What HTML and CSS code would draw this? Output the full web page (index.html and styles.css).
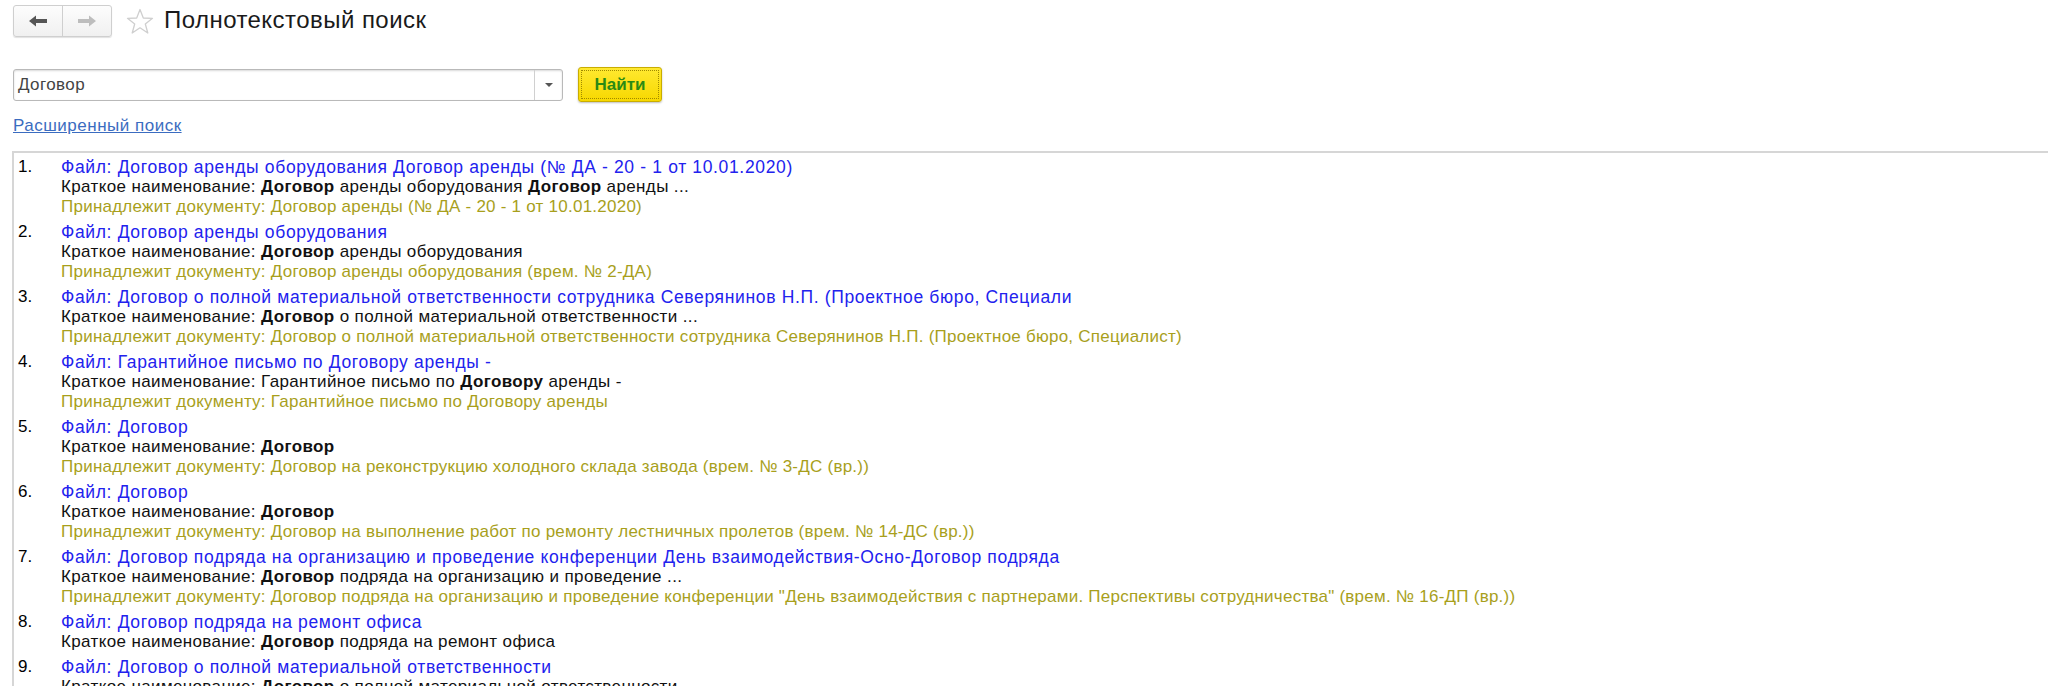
FILE: index.html
```html
<!DOCTYPE html>
<html lang="ru">
<head>
  <meta charset="UTF-8">
  <title>Полнотекстовый поиск</title>
  <link rel="stylesheet" href="styles.css">
</head>
<body>
  <!-- Заголовок формы -->
  <div class="header">
    <div class="nav-group">
      <button class="nav-btn nav-back" type="button">
        <svg width="20" height="14" viewBox="0 0 20 14"><path d="M1 7 L8 1.5 V5 H19 V9 H8 V12.5 Z" fill="#555"/></svg>
      </button>
      <button class="nav-btn nav-fwd" type="button">
        <svg width="20" height="14" viewBox="0 0 20 14"><path d="M19 7 L12 1.5 V5 H1 V9 H12 V12.5 Z" fill="#bdbdbd"/></svg>
      </button>
    </div>
    <svg class="star" width="28" height="27" viewBox="0 0 28 27">
      <path d="M14 1.5 L17.3 10 L26.5 10.3 L19.3 16 L21.8 25 L14 19.8 L6.2 25 L8.7 16 L1.5 10.3 L10.7 10 Z" fill="none" stroke="#cfcfcf" stroke-width="1.3" stroke-linejoin="round"/>
    </svg>
    <h1 class="title">Полнотекстовый поиск</h1>
  </div>

  <!-- Строка поиска -->
  <div class="search-row">
    <div class="combo">
      <span class="combo-text">Договор</span>
      <span class="combo-btn"><span class="combo-arrow"></span></span>
    </div>
    <button class="find-btn" type="button"><span class="find-inner">Найти</span></button>
  </div>

  <a class="adv-link" href="#">Расширенный поиск</a>

  <!-- Результаты -->
  <div class="results">
    <div class="item">
      <div class="num">1.</div>
      <div class="body">
        <div class="ttl">Файл: Договор аренды оборудования Договор аренды (№ ДА - 20 - 1 от 10.01.2020)</div>
        <div class="desc">Краткое наименование: <b>Договор</b> аренды оборудования <b>Договор</b> аренды ...</div>
        <div class="owner">Принадлежит документу: Договор аренды (№ ДА - 20 - 1 от 10.01.2020)</div>
      </div>
    </div>
    <div class="item">
      <div class="num">2.</div>
      <div class="body">
        <div class="ttl">Файл: Договор аренды оборудования</div>
        <div class="desc">Краткое наименование: <b>Договор</b> аренды оборудования</div>
        <div class="owner">Принадлежит документу: Договор аренды оборудования (врем. № 2-ДА)</div>
      </div>
    </div>
    <div class="item">
      <div class="num">3.</div>
      <div class="body">
        <div class="ttl">Файл: Договор о полной материальной ответственности сотрудника Северянинов Н.П. (Проектное бюро, Специали</div>
        <div class="desc">Краткое наименование: <b>Договор</b> о полной материальной ответственности ...</div>
        <div class="owner">Принадлежит документу: Договор о полной материальной ответственности сотрудника Северянинов Н.П. (Проектное бюро, Специалист)</div>
      </div>
    </div>
    <div class="item">
      <div class="num">4.</div>
      <div class="body">
        <div class="ttl">Файл: Гарантийное письмо по Договору аренды -</div>
        <div class="desc">Краткое наименование: Гарантийное письмо по <b>Договору</b> аренды -</div>
        <div class="owner">Принадлежит документу: Гарантийное письмо по Договору аренды</div>
      </div>
    </div>
    <div class="item">
      <div class="num">5.</div>
      <div class="body">
        <div class="ttl">Файл: Договор</div>
        <div class="desc">Краткое наименование: <b>Договор</b></div>
        <div class="owner">Принадлежит документу: Договор на реконструкцию холодного склада завода (врем. № 3-ДС (вр.))</div>
      </div>
    </div>
    <div class="item">
      <div class="num">6.</div>
      <div class="body">
        <div class="ttl">Файл: Договор</div>
        <div class="desc">Краткое наименование: <b>Договор</b></div>
        <div class="owner">Принадлежит документу: Договор на выполнение работ по ремонту лестничных пролетов (врем. № 14-ДС (вр.))</div>
      </div>
    </div>
    <div class="item">
      <div class="num">7.</div>
      <div class="body">
        <div class="ttl">Файл: Договор подряда на организацию и проведение конференции День взаимодействия-Осно-Договор подряда</div>
        <div class="desc">Краткое наименование: <b>Договор</b> подряда на организацию и проведение ...</div>
        <div class="owner">Принадлежит документу: Договор подряда на организацию и проведение конференции "День взаимодействия с партнерами. Перспективы сотрудничества" (врем. № 16-ДП (вр.))</div>
      </div>
    </div>
    <div class="item">
      <div class="num">8.</div>
      <div class="body">
        <div class="ttl">Файл: Договор подряда на ремонт офиса</div>
        <div class="desc">Краткое наименование: <b>Договор</b> подряда на ремонт офиса</div>
      </div>
    </div>
    <div class="item">
      <div class="num">9.</div>
      <div class="body">
        <div class="ttl">Файл: Договор о полной материальной ответственности</div>
        <div class="desc">Краткое наименование: <b>Договор</b> о полной материальной ответственности</div>
      </div>
    </div>
  </div>
</body>
</html>
```
FILE: styles.css
```css
/* БАЗА */
* {
  margin: 0;
  padding: 0;
  box-sizing: border-box;
}
html, body {
  height: 100%;
  overflow: hidden;
  background: #fff;
  font-family: "Liberation Sans", Arial, sans-serif;
  color: #000;
}
body {
  padding-left: 13px;
}

/* Заголовок */
.header {
  display: flex;
  align-items: center;
  height: 42px;
}
.nav-group {
  display: flex;
  height: 32px;
  border: 1px solid #cfcfcf;
  border-radius: 3px;
  box-shadow: 0 1px 1px rgba(0, 0, 0, 0.12);
  background: linear-gradient(#fdfdfd, #f0f0f0);
}
.nav-btn {
  width: 48px;
  height: 30px;
  border: none;
  background: transparent;
  display: flex;
  align-items: center;
  justify-content: center;
}
.nav-back {
  border-right: 1px solid #cfcfcf;
  width: 49px;
}
.star {
  margin-left: 14px;
  margin-top: 1px;
}
.title {
  margin-left: 10px;
  margin-top: -2px;
  font-size: 24px;
  letter-spacing: 0.45px;
  font-weight: normal;
  color: #1a1a1a;
}

/* Поиск */
.search-row {
  display: flex;
  align-items: center;
  margin-top: 25px;
}
.combo {
  display: flex;
  width: 550px;
  height: 32px;
  border: 1px solid #b9b9b9;
  border-radius: 3px;
  box-shadow: inset 0 1px 2px rgba(0, 0, 0, 0.15);
}
.combo-text {
  flex: 1;
  padding-left: 4px;
  font-size: 17px;
  letter-spacing: 0.4px;
  line-height: 30px;
  color: #444;
}
.combo-btn {
  width: 28px;
  border-left: 1px solid #d0d0d0;
  display: flex;
  align-items: center;
  justify-content: center;
}
.combo-arrow {
  width: 0;
  height: 0;
  border-left: 4px solid transparent;
  border-right: 4px solid transparent;
  border-top: 4px solid #555;
}
.find-btn {
  margin-left: 15px;
  width: 84px;
  height: 35px;
  padding: 2px;
  border: 1px solid #c9ad00;
  border-radius: 3px;
  background: linear-gradient(#ffe930, #f7d800);
  box-shadow: 0 1px 2px rgba(0, 0, 0, 0.25);
  font-family: "Liberation Sans", Arial, sans-serif;
}
.find-inner {
  display: block;
  height: 100%;
  border: 1px dotted #a08a00;
  font-size: 17px;
  font-weight: bold;
  line-height: 27px;
  color: #2a8a14;
}

/* Ссылка */
.adv-link {
  display: inline-block;
  margin-top: 14px;
  font-size: 17px;
  letter-spacing: 0.5px;
  color: #3b6cc0;
  text-decoration: underline;
}

/* Список результатов */
.results {
  margin-top: 15px;
  margin-left: -1px;
  margin-right: -20px;
  border-top: 2px solid #d6d6d6;
  border-left: 2px solid #d6d6d6;
  padding: 4px 0 0 4px;
  font-size: 17px;
  line-height: 20px;
}
.item {
  display: flex;
  margin-bottom: 5px;
}
.num {
  width: 43px;
  flex-shrink: 0;
}
.body {
  white-space: nowrap;
}
.ttl {
  color: #2222ee;
  font-size: 17.5px;
  letter-spacing: 0.65px;
}
.desc {
  color: #111;
  letter-spacing: 0.37px;
}
.owner {
  color: #a89f1c;
  letter-spacing: 0.24px;
}
```
